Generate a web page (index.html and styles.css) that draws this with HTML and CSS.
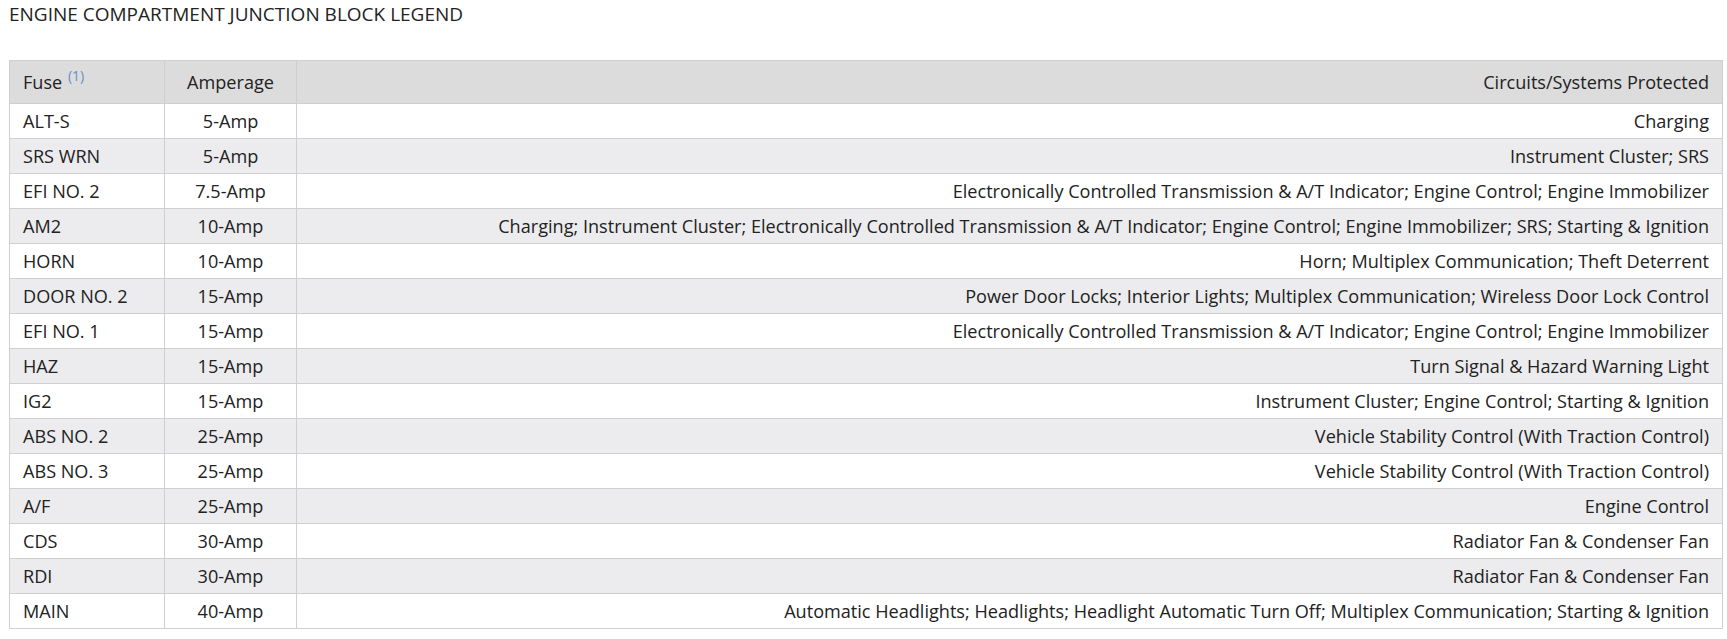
FILE: index.html
```html
<!DOCTYPE html>
<html lang="en">
<head>
<meta charset="utf-8">
<title>Engine Compartment Junction Block Legend</title>
<link rel="stylesheet" href="styles.css">
</head>
<body>
<div class="page">
  <h2 class="title">ENGINE COMPARTMENT JUNCTION BLOCK LEGEND</h2>
  <table class="legend">
    <thead>
      <tr>
        <th class="c-fuse">Fuse <sup class="note">(1)</sup></th>
        <th class="c-amp">Amperage</th>
        <th class="c-sys">Circuits/Systems Protected</th>
      </tr>
    </thead>
    <tbody>
      <tr><td class="c-fuse">ALT-S</td><td class="c-amp">5-Amp</td><td class="c-sys">Charging</td></tr>
      <tr><td class="c-fuse">SRS WRN</td><td class="c-amp">5-Amp</td><td class="c-sys">Instrument Cluster; SRS</td></tr>
      <tr><td class="c-fuse">EFI NO. 2</td><td class="c-amp">7.5-Amp</td><td class="c-sys">Electronically Controlled Transmission &amp; A/T Indicator; Engine Control; Engine Immobilizer</td></tr>
      <tr><td class="c-fuse">AM2</td><td class="c-amp">10-Amp</td><td class="c-sys">Charging; Instrument Cluster; Electronically Controlled Transmission &amp; A/T Indicator; Engine Control; Engine Immobilizer; SRS; Starting &amp; Ignition</td></tr>
      <tr><td class="c-fuse">HORN</td><td class="c-amp">10-Amp</td><td class="c-sys">Horn; Multiplex Communication; Theft Deterrent</td></tr>
      <tr><td class="c-fuse">DOOR NO. 2</td><td class="c-amp">15-Amp</td><td class="c-sys">Power Door Locks; Interior Lights; Multiplex Communication; Wireless Door Lock Control</td></tr>
      <tr><td class="c-fuse">EFI NO. 1</td><td class="c-amp">15-Amp</td><td class="c-sys">Electronically Controlled Transmission &amp; A/T Indicator; Engine Control; Engine Immobilizer</td></tr>
      <tr><td class="c-fuse">HAZ</td><td class="c-amp">15-Amp</td><td class="c-sys">Turn Signal &amp; Hazard Warning Light</td></tr>
      <tr><td class="c-fuse">IG2</td><td class="c-amp">15-Amp</td><td class="c-sys">Instrument Cluster; Engine Control; Starting &amp; Ignition</td></tr>
      <tr><td class="c-fuse">ABS NO. 2</td><td class="c-amp">25-Amp</td><td class="c-sys">Vehicle Stability Control (With Traction Control)</td></tr>
      <tr><td class="c-fuse">ABS NO. 3</td><td class="c-amp">25-Amp</td><td class="c-sys">Vehicle Stability Control (With Traction Control)</td></tr>
      <tr><td class="c-fuse">A/F</td><td class="c-amp">25-Amp</td><td class="c-sys">Engine Control</td></tr>
      <tr><td class="c-fuse">CDS</td><td class="c-amp">30-Amp</td><td class="c-sys">Radiator Fan &amp; Condenser Fan</td></tr>
      <tr><td class="c-fuse">RDI</td><td class="c-amp">30-Amp</td><td class="c-sys">Radiator Fan &amp; Condenser Fan</td></tr>
      <tr><td class="c-fuse">MAIN</td><td class="c-amp">40-Amp</td><td class="c-sys">Automatic Headlights; Headlights; Headlight Automatic Turn Off; Multiplex Communication; Starting &amp; Ignition</td></tr>
    </tbody>
  </table>
</div>
</body>
</html>
```

FILE: styles.css
```css
html, body {
  margin: 0;
  padding: 0;
  background: #ffffff;
}

body {
  font-family: "Open Sans", "Noto Sans", "Liberation Sans", sans-serif;
  color: #222222;
}

.page {
  padding: 0 4px 0 9px;
}

.title {
  margin: 0;
  padding-top: 2px;
  height: 58px;
  font-size: 19px;
  font-weight: 400;
  line-height: 24px;
  color: #222222;
}

.legend {
  width: 100%;
  border-collapse: collapse;
  font-size: 18.1px;
}

.legend th,
.legend td {
  border: 1px solid #cfcfcf;
  padding: 0 13px;
  font-weight: 400;
  white-space: nowrap;
  line-height: 22px;
}

.legend th {
  background: #dcdcdc;
  height: 42px;
}

.legend td {
  height: 34px;
}

.legend tbody tr:nth-child(even) td {
  background: #ececee;
}

.c-fuse {
  width: 128px;
  text-align: left;
}

.c-amp {
  width: 105px;
  text-align: center;
}

.c-sys {
  text-align: right;
}

.note {
  color: #6a8fc6;
  font-size: 14px;
  vertical-align: top;
  position: relative;
  top: -6px;
  margin-left: 1px;
}
```
